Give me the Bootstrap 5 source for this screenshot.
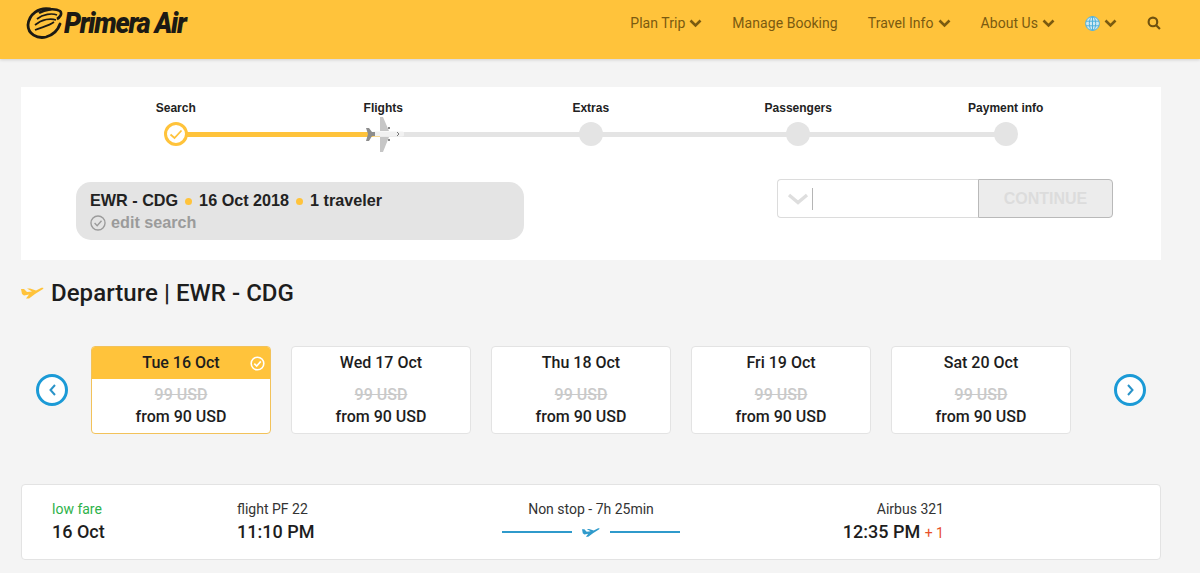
<!DOCTYPE html>
<html lang="en">
<head>
    <meta charset="UTF-8">
    <meta name="viewport" content="width=device-width, initial-scale=1.0">
    <title>Primera Air - Flights</title>
    <link href="https://cdn.jsdelivr.net/npm/bootstrap@5.3.0/dist/css/bootstrap.min.css" rel="stylesheet">
    <style>
        body { background: #f4f4f4; font-family: Roboto, sans-serif; color: #1d1d1d; overflow: hidden; }
        .top-bar { height: 59px; background: #ffc33b; box-shadow: 0 1px 3px rgba(0,0,0,.15); padding: 0 39px 0 26px; }
        .logo-wrap { padding-bottom: 13px; }
        .logo-text { font: italic 900 29px/1 Roboto, sans-serif; letter-spacing: -1.4px; color: #1c1a14; transform: scaleX(.93); transform-origin: left; margin-left: 1px; white-space: nowrap; }
        .top-links { gap: 30px; font-size: 14px; color: #7a5a10; padding-bottom: 13px; letter-spacing: .05px; }
        .top-links span { display: flex; align-items: center; gap: 4px; }
        .search-panel { background: #fff; margin: 28px 39px 0 21px; height: 173px; padding: 14px 48px 0 51px; }
        .step-row { position: relative; width: 1038px; height: 60px; display: flex; }
        .step-line { position: absolute; left: 100px; top: 31px; width: 830px; height: 5px; background: #e4e4e4; }
        .step-done { position: absolute; left: 0; top: 0; width: 208px; height: 5px; background: #ffc33b; }
        .step { width: 207.5px; text-align: center; position: relative; font: 700 12px/15px "Liberation Sans", sans-serif; color: #222; }
        .step-dot { width: 24px; height: 24px; border-radius: 50%; background: #e4e4e4; margin: 6px auto 0; }
        .step-dot.active { background: #fff; border: 3px solid #ffc33b; display: flex; align-items: center; justify-content: center; }
        .plane-mark { display: block; margin: 0 auto; position: relative; left: 2px; }
        .trip-row { margin-top: 21px; padding-left: 4px; }
        .trip-box { width: 448px; height: 58px; background: #e4e4e4; border-radius: 15px; padding: 9px 14px; font: 700 16.2px/19px "Liberation Sans", sans-serif; color: #222; }
        .trip-dot { display: inline-block; width: 7px; height: 7px; border-radius: 50%; background: #ffc33b; margin: 0 2.5px 1px 2.5px; }
        .trip-edit { color: #9b9b9b; margin-top: 3px; display: flex; align-items: center; gap: 5px; }
        .continue-box { width: 336px; height: 39px; margin-top: -3px; }
        .continue-select { flex: 1; background: #fff; border: 1px solid #dcdcdc; border-right: 0; border-radius: 4px 0 0 4px; padding-left: 9px; }
        .select-caret { width: 1px; height: 22px; background: #b5b5b5; margin-left: 3px; }
        .continue-btn { width: 135px; border: 1px solid #b9b9b9; border-radius: 0 4px 4px 0; background: #ececec; color: #dcdcdc; font: 700 16px/1 "Liberation Sans", sans-serif; padding: 1px 0 0; }
        .section-head { margin: 18px 0 0 21px; height: 30px; gap: 7px; font-size: 24px; font-weight: 500; line-height: 30px; letter-spacing: .05px; }
        .day-row { margin: 38px 0 0 36px; }
        .round-nav { width: 32px; height: 32px; border-radius: 50%; border: 3px solid #1b9ad6; display: flex; align-items: center; justify-content: center; background: #fff; flex: none; }
        .day-cards { gap: 20px; margin: 0 43px 0 23px; }
        .day-card { width: 180px; height: 88px; background: #fff; border: 1px solid #e3e3e3; border-radius: 4px; overflow: hidden; text-align: center; }
        .day-card.picked { border-color: #f2c25a; }
        .day-title { height: 32px; font-size: 16px; font-weight: 500; line-height: 31px; position: relative; }
        .picked .day-title { background: #ffc33b; }
        .day-check { position: absolute; right: 5px; top: 9px; }
        .old-price { font-size: 16px; line-height: 20px; color: #c9c9c9; text-decoration: line-through; margin-top: 6px; font-weight: 500; }
        .new-price { font-size: 16px; line-height: 24px; font-weight: 500; }
        .flight-card { margin: 50px 39px 0 21px; height: 76px; background: #fff; border: 1px solid #e3e3e3; border-radius: 4px; position: relative; }
        .flight-cell { position: absolute; top: 15px; font-size: 14px; line-height: 18px; color: #333; }
        .flight-time { font-size: 18px; font-weight: 500; line-height: 28px; color: #1d1d1d; }
        .route-row { height: 28px; }
        .fare-label { color: #2eb24a; }
        .next-day { font-size: 14px; font-weight: 400; color: #e8502a; }
        .route-line { width: 70px; height: 2px; background: #2f9acb; }
    </style>
</head>
<body>
    <div class="top-bar d-flex justify-content-between align-items-center">
        <div class="logo-wrap d-flex align-items-center">
            <svg width="37" height="34" viewBox="0 0 37 34" fill="none" stroke="#1c1a14">
                <path d="M24 3 C13 1 3 8 2 19 C2 28 11 33 20 31 C27 29 32 24 34 18" stroke-width="2.8" stroke-linecap="round"/>
                <path d="M13 7 C19 3 29 2 34 5 C37 8 33 12 31 13" stroke-width="2.6"/>
                <path d="M11 13 C17 8 26 7 31 9" stroke-width="1.7"/>
                <path d="M9 19 C16 13 25 12 30 14" stroke-width="1.7"/>
                <path d="M9 24 C16 21 23 20 28 16" stroke-width="1.7"/>
            </svg>
            <span class="logo-text">Primera Air</span>
        </div>
        <div class="top-links d-flex align-items-center">
            <span>Plan Trip <svg width="13" height="9" viewBox="0 0 13 9"><path d="M1.5 1.5 6.5 6.5 11.5 1.5" fill="none" stroke="#7a5a10" stroke-width="2.6"/></svg></span>
            <span>Manage Booking</span>
            <span>Travel Info <svg width="13" height="9" viewBox="0 0 13 9"><path d="M1.5 1.5 6.5 6.5 11.5 1.5" fill="none" stroke="#7a5a10" stroke-width="2.6"/></svg></span>
            <span>About Us <svg width="13" height="9" viewBox="0 0 13 9"><path d="M1.5 1.5 6.5 6.5 11.5 1.5" fill="none" stroke="#7a5a10" stroke-width="2.6"/></svg></span>
            <span>
                <svg width="15" height="15" viewBox="0 0 15 15" fill="none" stroke="#4fb0dc" stroke-width="1"><circle cx="7.5" cy="7.5" r="6.9" fill="#cfe9f2"/><ellipse cx="7.5" cy="7.5" rx="3.2" ry="6.9"/><path d="M1 5.2H14M1 9.8H14M7.5 1V14"/></svg>
                <svg width="13" height="9" viewBox="0 0 13 9"><path d="M1.5 1.5 6.5 6.5 11.5 1.5" fill="none" stroke="#7a5a10" stroke-width="2.6"/></svg>
            </span>
            <span><svg width="14" height="14" viewBox="0 0 13 13" fill="none" stroke="#6f5210" stroke-width="2"><circle cx="5.5" cy="5.5" r="4"/><path d="M8.5 8.5 12 12"/></svg></span>
        </div>
    </div>

    <div class="search-panel">
        <div class="step-row">
            <div class="step-line"><div class="step-done"></div></div>
            <div class="step">Search
                <div class="step-dot active"><svg width="14" height="11" viewBox="0 0 14 11"><path d="M1.5 5.5 5.5 9 12.5 1.5" fill="none" stroke="#ffc33b" stroke-width="1.8"/></svg></div>
            </div>
            <div class="step">Flights
                <svg class="plane-mark" width="38" height="36" viewBox="0 0 38 36">
                    <path d="M8 18H36" stroke="#f1f1f1" stroke-width="5" stroke-linecap="round"/>
                    <path d="M0 12H3L6 16H9V20H6L3 25H0L2 18Z" fill="#8d8d8d"/>
                    <path d="M14 1 17 1 23 15H14ZM14 21H23L17 36H14Z" fill="#c6c6c6"/>
                    <path d="M22 11H24V13H22ZM22 23H24V25H22Z" fill="#888"/>
                    <path d="M31 16 33 18 31 20" fill="none" stroke="#777" stroke-width="1"/>
                </svg>
            </div>
            <div class="step">Extras<div class="step-dot"></div></div>
            <div class="step">Passengers<div class="step-dot"></div></div>
            <div class="step">Payment info<div class="step-dot"></div></div>
        </div>
        <div class="trip-row d-flex justify-content-between">
            <div class="trip-box">
                <div>EWR - CDG <span class="trip-dot"></span> 16 Oct 2018 <span class="trip-dot"></span> 1 traveler</div>
                <div class="trip-edit">
                    <svg width="16" height="16" viewBox="0 0 15 15" fill="none" stroke="#9b9b9b" stroke-width="1.3"><circle cx="7.5" cy="7.5" r="6.6"/><path d="M4.3 7.6 6.7 10 10.8 5.4"/></svg>
                    edit search
                </div>
            </div>
            <div class="continue-box d-flex">
                <div class="continue-select d-flex align-items-center">
                    <svg width="22" height="12" viewBox="0 0 22 12"><path d="M2 2 11 9.5 20 2" fill="none" stroke="#dedede" stroke-width="3.4"/></svg>
                    <div class="select-caret"></div>
                </div>
                <button class="continue-btn" disabled>CONTINUE</button>
            </div>
        </div>
    </div>

    <div class="section-head d-flex align-items-center">
        <svg width="23" height="12" viewBox="0 0 23 12"><path d="M0 2H3L6 5 11 4.5 6 1.5H9L15 3.5 20 1C22 .3 23 1 22 2L14 7 8 11.5H5L8 7.5 3 8.5 1 7Z" fill="#ffc33b"/></svg>
        <span>Departure | EWR - CDG</span>
    </div>

    <div class="day-row d-flex align-items-center">
        <div class="round-nav"><svg width="9" height="14" viewBox="0 0 9 14"><path d="M7 2 2.5 7 7 12" fill="none" stroke="#2a93c8" stroke-width="2"/></svg></div>
        <div class="day-cards d-flex">
            <div class="day-card picked">
                <div class="day-title">Tue 16 Oct
                    <svg class="day-check" width="15" height="15" viewBox="0 0 15 15" fill="none" stroke="#fff" stroke-width="1.6"><circle cx="7.5" cy="7.5" r="6.3"/><path d="M4.3 7.6 6.7 10 10.8 5.4"/></svg>
                </div>
                <div class="old-price">99 USD</div>
                <div class="new-price">from 90 USD</div>
            </div>
            <div class="day-card">
                <div class="day-title">Wed 17 Oct</div>
                <div class="old-price">99 USD</div>
                <div class="new-price">from 90 USD</div>
            </div>
            <div class="day-card">
                <div class="day-title">Thu 18 Oct</div>
                <div class="old-price">99 USD</div>
                <div class="new-price">from 90 USD</div>
            </div>
            <div class="day-card">
                <div class="day-title">Fri 19 Oct</div>
                <div class="old-price">99 USD</div>
                <div class="new-price">from 90 USD</div>
            </div>
            <div class="day-card">
                <div class="day-title">Sat 20 Oct</div>
                <div class="old-price">99 USD</div>
                <div class="new-price">from 90 USD</div>
            </div>
        </div>
        <div class="round-nav"><svg width="9" height="14" viewBox="0 0 9 14"><path d="M2 2 6.5 7 2 12" fill="none" stroke="#2a93c8" stroke-width="2"/></svg></div>
    </div>

    <div class="flight-card d-flex">
        <div class="flight-cell" style="left:30px"><div class="fare-label">low fare</div><div class="flight-time">16 Oct</div></div>
        <div class="flight-cell" style="left:215px"><div>flight PF 22</div><div class="flight-time">11:10 PM</div></div>
        <div class="flight-cell text-center" style="left:480px;width:178px">
            <div>Non stop - 7h 25min</div>
            <div class="route-row d-flex align-items-center justify-content-between">
                <div class="route-line"></div>
                <svg width="18" height="11" viewBox="0 0 23 12"><path d="M0 2H3L6 5 11 4.5 6 1.5H9L15 3.5 20 1C22 .3 23 1 22 2L14 7 8 11.5H5L8 7.5 3 8.5 1 7Z" fill="#2f9acb"/></svg>
                <div class="route-line"></div>
            </div>
        </div>
        <div class="flight-cell text-end" style="right:216px"><div>Airbus 321</div><div class="flight-time">12:35 PM <span class="next-day">+ 1</span></div></div>
    </div>

    <script src="https://cdn.jsdelivr.net/npm/bootstrap@5.3.0/dist/js/bootstrap.bundle.min.js"></script>
</body>
</html>
